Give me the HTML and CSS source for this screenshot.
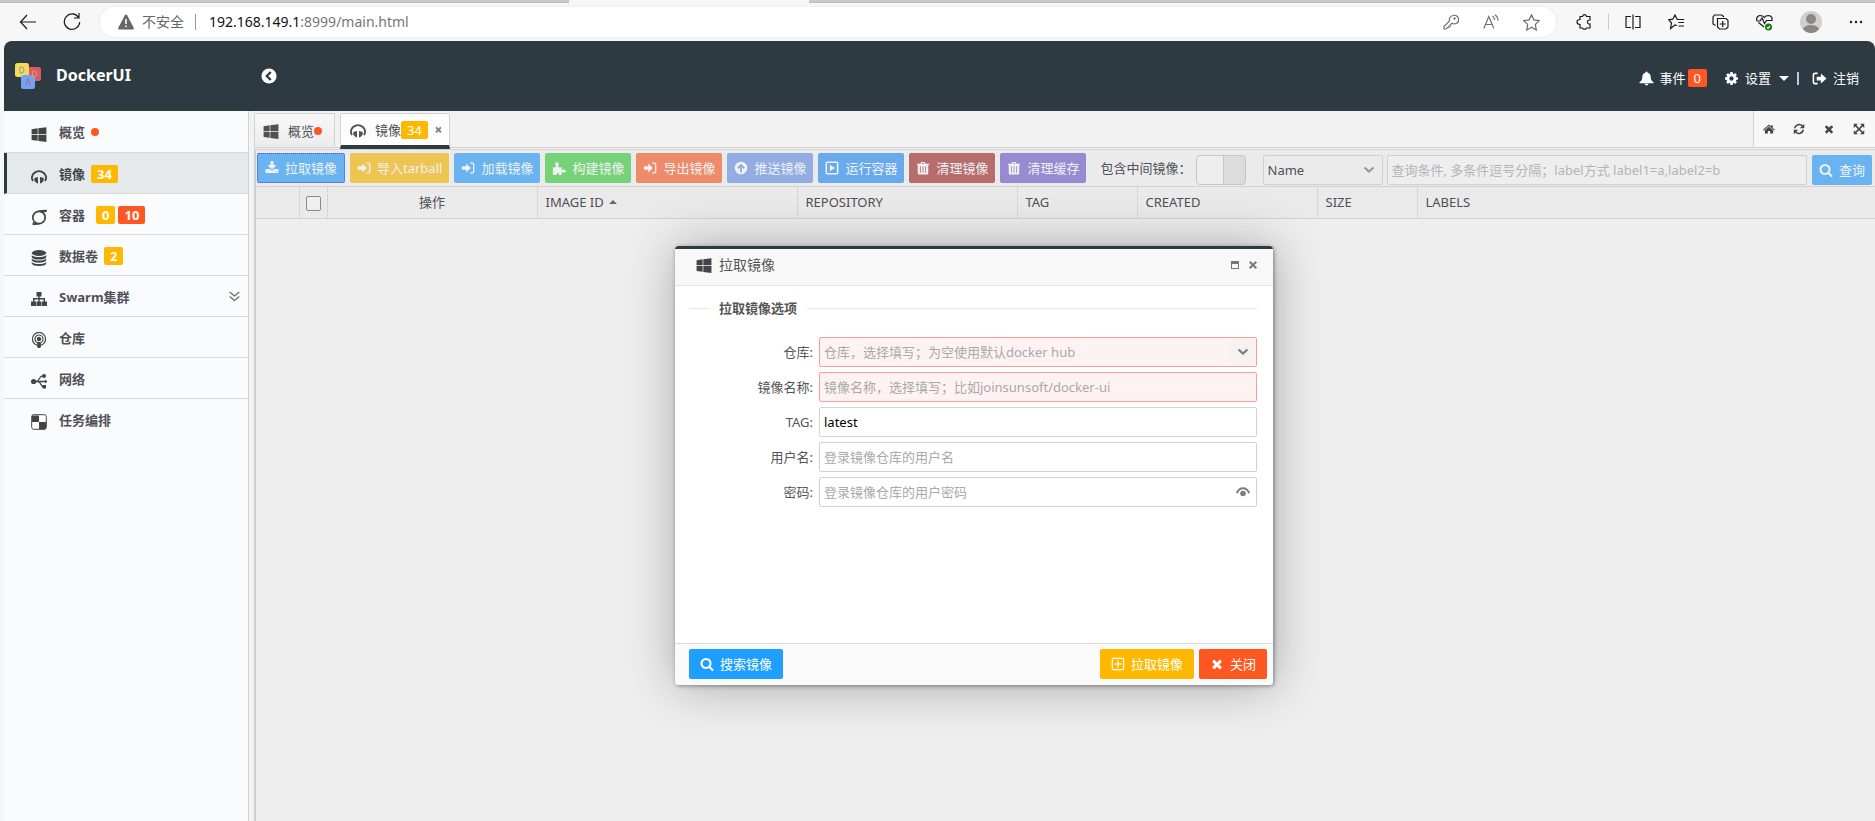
FILE: index.html
```html
<!DOCTYPE html>
<html lang="zh-CN">
<head>
<meta charset="utf-8">
<title>DockerUI</title>
<link rel="stylesheet" href="styles.css">
</head>
<body>
<svg class="sprite" aria-hidden="true">
  <symbol id="windows" viewBox="0 0 1792 1792"><path d="M746 1006v651l-682-94v-557h682zm0-743v659h-682v-565zm982 743v786l-907-125v-661h907zm0-878v794h-907v-669z"/></symbol>
  <symbol id="times" viewBox="0 0 1792 1792"><path d="M1490 1322q0 40-28 68l-136 136q-28 28-68 28t-68-28l-294-294-294 294q-28 28-68 28t-68-28l-136-136q-28-28-28-68t28-68l294-294-294-294q-28-28-28-68t28-68l136-136q28-28 68-28t68 28l294 294 294-294q28-28 68-28t68 28l136 136q28 28 28 68t-28 68l-294 294 294 294q28 28 28 68z"/></symbol>
  <symbol id="search" viewBox="0 0 1792 1792"><path d="M1216 832q0-185-131.500-316.500t-316.500-131.500-316.500 131.500-131.500 316.500 131.500 316.500 316.500 131.500 316.500-131.500 131.500-316.500zm512 832q0 52-38 90t-90 38q-54 0-90-38l-343-342q-179 124-399 124-143 0-273.500-55.500t-225-150-150-225-55.500-273.500 55.500-273.500 150-225 225-150 273.500-55.500 273.500 55.500 225 150 150 225 55.500 273.500q0 220-124 399l343 343q37 37 37 90z"/></symbol>
  <symbol id="download" viewBox="0 0 1792 1792"><path d="M1344 1344q0-26-19-45t-45-19-45 19-19 45 19 45 45 19 45-19 19-45zm256 0q0-26-19-45t-45-19-45 19-19 45 19 45 45 19 45-19 19-45zm128-224v320q0 40-28 68t-68 28h-1472q-40 0-68-28t-28-68v-320q0-40 28-68t68-28h465l135 136q58 56 136 56t136-56l136-136h464q40 0 68 28t28 68zm-325-569q17 41-14 70l-448 448q-18 19-45 19t-45-19l-448-448q-31-29-14-70 17-39 59-39h256v-448q0-26 19-45t45-19h256q26 0 45 19t19 45v448h256q42 0 59 39z"/></symbol>
  <symbol id="cog" viewBox="0 0 1792 1792"><path d="M1152 896q0-106-75-181t-181-75-181 75-75 181 75 181 181 75 181-75 75-181zm512-109v222q0 12-8 23t-20 13l-185 28q-19 54-39 91 35 50 107 138 10 12 10 25t-9 23q-27 37-99 108t-94 71q-12 0-26-9l-138-108q-44 23-91 38-16 136-29 186-7 28-36 28h-222q-14 0-24.500-8.500t-11.500-21.500l-28-184q-49-16-90-37l-141 107q-10 9-25 9-14 0-25-11-126-114-165-168-7-10-7-23 0-12 8-23 15-21 51-66.500t54-70.500q-27-50-41-99l-183-27q-13-2-21-12.500t-8-23.500v-222q0-12 8-23t19-13l186-28q14-46 39-92-40-57-107-138-10-12-10-24 0-10 9-23 26-36 98.500-107.500t94.500-71.500q13 0 26 10l138 107q44-23 91-38 16-136 29-186 7-28 36-28h222q14 0 24.500 8.500t11.500 21.500l28 184q49 16 90 37l142-107q9-9 24-9 13 0 25 10 129 119 165 170 7 8 7 22 0 12-8 23-15 21-51 66.500t-54 70.500q26 50 41 98l183 28q13 2 21 12.500t8 23.500z"/></symbol>
  <symbol id="mirror" viewBox="0 0 16 16"><path d="M2 13A7 6.500 0 1 1 14 13" fill="none" stroke="currentColor" stroke-width="2"/><path d="M3.200 10 7 9v6.500L5.500 15 3.500 13zM12.800 10 9 9v6.500l1.500-.5 2-2z"/></symbol>
  <symbol id="ring" viewBox="0 0 16 16"><circle cx="8" cy="8.500" r="6.200" fill="none" stroke="currentColor" stroke-width="1.700"/><path d="M7 1.600Q12 .6 16 .8L15.500 3 12 3.500zM1.800 13l2.700 1L9 15.400 4 16H1.500z"/></symbol>
  <symbol id="database" viewBox="0 0 16 16"><ellipse cx="8" cy="3" rx="7.300" ry="2.900"/><path d="M.7 5q2 2 7.300 2t7.300-2v2q-1 2.600-7.300 2.600T.7 7zM.7 8.600q2 2 7.300 2t7.300-2v1.500q-1 2.700-7.300 2.700T.7 10.100zM.7 12q2 2 7.300 2t7.300-2v1.500Q14.300 16 8 16T.7 13.500z"/></symbol>
  <symbol id="sitemap" viewBox="0 0 16 16"><path d="M5.500 1h5v4.500H8.700V7H14v3.500h2V15h-5v-4.500h1.500v-2H8.700v2h1.800V15h-5v-4.500h1.800v-2H3.500v2H5V15H0v-4.500h2V7h5.300V5.500H5.500z"/></symbol>
  <symbol id="podcast" viewBox="0 0 16 16"><circle cx="8" cy="7" r="6.600" fill="none" stroke="currentColor" stroke-width="1.200"/><circle cx="8" cy="7" r="4" fill="none" stroke="currentColor" stroke-width="1.200"/><circle cx="8" cy="7" r="2.200"/><rect x="6.200" y="10" width="3.600" height="6" rx="1.200"/></symbol>
  <symbol id="share" viewBox="0 0 16 16"><circle cx="2.600" cy="8.500" r="2.600"/><path d="M3 8.500h13M5 8.500q2-.2 3.500-3T12 3M7 8.500q2 .5 3 3t3 2.500" fill="none" stroke="currentColor" stroke-width="1.300"/><circle cx="13" cy="3" r="2"/><path d="M11.500 12H15v3.500h-3.500zM14 6.500l2 2-2 2z"/></symbol>
  <symbol id="check" viewBox="0 0 16 16"><rect x=".7" y=".7" width="14.600" height="14.600" rx="2" fill="#fff" stroke="currentColor" stroke-width="1"/><path d="M8 8h7v6.300l-1 1H8zM1 1.500h7V8H1z"/></symbol>
  <symbol id="signin" viewBox="0 0 16 16"><path d="M1 6h5V2.800L11.200 8 6 13.200V10H1z"/><path d="M10.500 2.500H13q1.500 0 1.500 1.500v8q0 1.500-1.500 1.500h-2.500" fill="none" stroke="currentColor" stroke-width="1.500"/></symbol>
  <symbol id="signout" viewBox="0 0 16 16"><path d="M5 6h4.500V2.700L15.500 8l-6 5.300V10H5z"/><path d="M6 2.500H3.200Q1.500 2.500 1.500 4v8q0 1.500 1.700 1.500H6" fill="none" stroke="currentColor" stroke-width="1.700"/></symbol>
  <symbol id="puzzle" viewBox="0 0 16 16"><path d="M1 7h3.500Q5 6.500 4 5 3 2 5.500 1.500 8.500 2 7.500 5 6.500 6.500 7.500 7H11v3q.5.800 2-.2Q16 9.500 16 11.500t-3 1.800Q11.500 12 11 13v3H8q0-1-.5-2t-1.500 0-.5 2H1z"/></symbol>
  <symbol id="up" viewBox="0 0 16 16"><path fill-rule="evenodd" d="M8 .8a7.200 7.200 0 1 1 0 14.400A7.200 7.200 0 0 1 8 .8zM8 3 3.500 7.500 5 9l1.900-1.800V13h2.200V7.200L11 9l1.500-1.500z"/></symbol>
  <symbol id="play" viewBox="0 0 16 16"><rect x="1.500" y="1.500" width="13" height="13" rx="1" fill="none" stroke="currentColor" stroke-width="1.800"/><path d="m5.500 4.300 6 3.700-6 3.700z"/></symbol>
  <symbol id="trash" viewBox="0 0 16 16"><path fill-rule="evenodd" d="M6 1h4l1 2h4v1.600h-1V14q0 1.500-1.500 1.500h-9Q2 15.500 2 14V4.600H1V3h4zm.7 1.200L6.300 3h3.400l-.4-.8zM4.500 6v7.500h1V6zm3 0v7.500h1V6zm3 0v7.500h1V6z"/></symbol>
  <symbol id="bell" viewBox="0 0 16 16"><path d="M8 .5q1 0 1 1 3.500 1 3.500 5 0 4 3 5.500V13H.5v-1q3-1.500 3-5.500 0-4 3.500-5 0-1 1-1zM6 13.600h4Q9.800 15.500 8 15.500T6 13.600z"/></symbol>
  <symbol id="home" viewBox="0 0 16 16"><path d="M8 2 11 4.700V3h2v3.500L16 9l-1 1-7-6-7 6-1-1zM2.500 9.700 8 5l5.500 4.700V14h-4v-3.500h-3V14h-4z"/></symbol>
  <symbol id="refresh" viewBox="0 0 16 16"><path d="M2.200 7A6 6 0 0 1 12.500 4M13.800 9A6 6 0 0 1 3.500 12" fill="none" stroke="currentColor" stroke-width="2"/><path d="M15 1v6H9zM1 15V9h6z"/></symbol>
  <symbol id="expand" viewBox="0 0 16 16"><path d="M1 1h5.500l-2 2L8 6.500 11.500 3l-2-2H15v5.500l-2-2L9.500 8l3.500 3.500 2-2V15H9.500l2-2L8 9.500 4.500 13l2 2H1V9.500l2 2L6.500 8 3 4.500l-2 2z"/></symbol>
  <symbol id="plusbox" viewBox="0 0 16 16"><path d="M2.500 1.500h11q1 0 1 1v11q0 1-1 1h-11q-1 0-1-1v-11q0-1 1-1zM8 4v8M4 8h8" fill="none" stroke="currentColor" stroke-width="1.300"/></symbol>
  <symbol id="chevron" viewBox="0 0 12 12"><path d="m1.500 3.500 4.500 4 4.500-4" fill="none" stroke="currentColor" stroke-width="2.200"/></symbol>
</svg>

<div class="browser">
  <div class="tabstrip"><span class="tab-active"></span></div>
  <div class="browser-bar">
    <button class="nav-btn" aria-label="后退"><svg width="18" height="18" viewBox="0 0 18 18" class="line"><path d="M17 9H1.500M8 2 1.500 9 8 16"/></svg></button>
    <button class="nav-btn" aria-label="刷新"><svg width="18" height="18" viewBox="0 0 18 18" class="line"><path d="M15.500 4.500A7.700 7.700 0 1 0 16.700 9M16 0v5h-5"/></svg></button>
    <div class="address">
      <svg width="16" height="16" viewBox="0 0 16 16" class="warn"><path d="M8 .5q.7 0 1.100.7l6.600 12.500q.6 1.600-1 1.800H1.300q-1.600-.2-1-1.800L6.900 1.200Q7.300.5 8 .5z"/><path d="M7.200 5h1.600v5H7.200zM7.200 11.500h1.600V13H7.200z" fill="#fff"/></svg>
      <span class="insecure">不安全</span>
      <span class="address-sep"></span>
      <span class="url"><b>192.168.149.1</b>:8999/main.html</span>
      <span class="address-icons">
        <svg width="16" height="16" viewBox="0 0 16 16" class="line"><path d="M10 1.500a4.300 4.300 0 1 1-1 7.700L7.500 10.500V12H6v1.500H4.500L3 15H1v-2.500l5.500-5.700A4.300 4.300 0 0 1 10 1.500z"/><circle cx="11.500" cy="4.500" r=".6"/></svg>
        <svg width="16" height="16" viewBox="0 0 16 16" class="line"><path d="m.8 14.500 5-12 5 12M2.500 10.500h6.700M9.500 2q2 1.500 2 4M12 .8q3 2.200 3 5.700"/></svg>
        <svg width="17" height="17" viewBox="0 0 16 16" class="line"><path d="m8 .8 2.200 4.700 5.100.7-3.700 3.600.9 5.200L8 12.500 3.500 15l.9-5.200L.7 6.200l5.100-.7z"/></svg>
      </span>
    </div>
    <div class="browser-tools">
      <svg width="16" height="16" viewBox="0 0 16 16" class="line"><path d="M4 2.500h2.500Q7 .7 8.500.7t2 1.800H14V6q-2.500-.2-2.500 2t2.500 2v4h-3.500q-.5 1.300-2 1.300T6.500 14H4v-3.500Q1 10.300 1 8t3-2.500z"/></svg>
      <span class="tool-sep"></span>
      <svg width="16" height="16" viewBox="0 0 16 16" class="line"><path d="M6 2.500H1v11h5M10 2.500h5v11h-5M8 .5v15"/></svg>
      <svg width="17" height="16" viewBox="0 0 17 16" class="line"><path d="M9 11.500 7 11l-4.500 3.500 1-5.500L.8 5.800l4-.6L7 1l2.200 4.500h7M10.500 8.500H16M10.500 12H16"/></svg>
      <svg width="17" height="16" viewBox="0 0 17 16" class="line"><path d="M3.500 11.500 1 10V3l1.500-2h7.500l2 2M5.500 4.500H14l2 2V13l-2 2H7.500l-2-2zM10.700 7v6M7.700 10h6"/></svg>
      <svg width="17" height="17" viewBox="0 0 17 17" class="line"><path d="M8 13 2.500 8.500M.8 7Q0 2 4 1.500q3 0 4.300 2Q9.500 1.500 12.500 1.500 17 2 15.800 7M.8 7H4l2-3 2.500 5.500 2-3H16"/><circle cx="12.500" cy="13" r="3.500" fill="#107c10" stroke="none"/><path d="m11 13.300 1 1 2-2.300" stroke="#fff"/></svg>
      <svg width="22" height="22" viewBox="0 0 22 22"><circle cx="11" cy="11" r="11" fill="#d2d0ce"/><circle cx="11" cy="8" r="5" fill="#8a8886"/><path d="M3 18q2-4 8-4t8 4q-3 4-8 4t-8-4z" fill="#8a8886"/></svg>
      <svg width="14" height="4" viewBox="0 0 14 4"><circle cx="2" cy="2" r="1.200"/><circle cx="7" cy="2" r="1.200"/><circle cx="12" cy="2" r="1.200"/></svg>
    </div>
  </div>
</div>

<div class="app">
  <header class="header">
    <div class="brand">
      <svg width="26" height="26" viewBox="0 0 26 26"><rect x="12" y="4" width="14" height="14" rx="2.500" fill="#d95b6b"/><rect width="14" height="14" rx="2.500" fill="#f3d95c"/><rect x="6" y="12" width="14" height="14" rx="2.500" fill="#6ea6f7"/><path d="M5 4v6h1.500Q9 10 9 7T6.500 4z" fill="none" stroke="#8ba38b"/><path d="M17.500 8v6H19q2.500 0 2.500-3T19 8z" fill="none" stroke="#f0995a"/><path d="m10.500 22.500 2.500-7 2.500 7m-4.200-2.500h3.400" fill="none" stroke="#b06aa0"/></svg>
      <h1 class="brand-name">DockerUI</h1>
    </div>
    <button class="collapse" aria-label="收起菜单"><svg width="16" height="16" viewBox="0 0 16 16"><circle cx="8" cy="8" r="7.600" fill="#fff"/><path d="M9.800 4 5.800 8l4 4" fill="none" stroke="#2d3a42" stroke-width="2.300"/></svg></button>
    <nav class="header-links">
      <a href="#" class="events"><svg class="ico"><use href="#bell"/></svg><span>事件</span><span class="badge red">0</span></a>
      <a href="#" class="settings"><svg class="ico"><use href="#cog"/></svg><span>设置</span><span class="caret"></span></a>
      <span class="header-sep"></span>
      <a href="#" class="logout"><svg class="ico"><use href="#signout"/></svg><span>注销</span></a>
    </nav>
  </header>

  <div class="body">
    <nav class="sidebar">
      <a href="#" class="item"><svg class="ico"><use href="#windows"/></svg><span>概览</span><span class="dot"></span></a>
      <a href="#" class="item current"><svg class="ico"><use href="#mirror"/></svg><span>镜像</span><span class="badge">34</span></a>
      <a href="#" class="item"><svg class="ico"><use href="#ring"/></svg><span>容器</span><span class="badges"><span class="badge">0</span><span class="badge red">10</span></span></a>
      <a href="#" class="item"><svg class="ico"><use href="#database"/></svg><span>数据卷</span><span class="badge">2</span></a>
      <a href="#" class="item"><svg class="ico"><use href="#sitemap"/></svg><span>Swarm集群</span><svg class="more" width="11" height="11" viewBox="0 0 11 11"><path d="m.7 1 4.800 4L10.300 1M.7 5.500l4.800 4 4.800-4" fill="none" stroke="currentColor" stroke-width="1.100"/></svg></a>
      <a href="#" class="item"><svg class="ico"><use href="#podcast"/></svg><span>仓库</span></a>
      <a href="#" class="item"><svg class="ico"><use href="#share"/></svg><span>网络</span></a>
      <a href="#" class="item"><svg class="ico"><use href="#check"/></svg><span>任务编排</span></a>
    </nav>

    <main class="main">
      <div class="tabs">
        <button class="tab"><svg class="ico"><use href="#windows"/></svg><span>概览</span><span class="dot"></span></button>
        <div class="tab active"><svg class="ico"><use href="#mirror"/></svg><span>镜像</span><span class="badge">34</span><button class="tab-close" aria-label="关闭标签"><svg><use href="#times"/></svg></button></div>
        <div class="tab-tools">
          <button aria-label="主页"><svg><use href="#home"/></svg></button>
          <button aria-label="刷新页面"><svg><use href="#refresh"/></svg></button>
          <button aria-label="关闭"><svg><use href="#times"/></svg></button>
          <button aria-label="全屏"><svg><use href="#expand"/></svg></button>
        </div>
      </div>

      <section class="content">
        <div class="toolbar">
          <div class="actions">
            <button class="btn sky focused"><svg><use href="#download"/></svg>拉取镜像</button>
            <button class="btn gold"><svg><use href="#signin"/></svg>导入tarball</button>
            <button class="btn sky"><svg><use href="#signin"/></svg>加载镜像</button>
            <button class="btn green"><svg><use href="#puzzle"/></svg>构建镜像</button>
            <button class="btn coral"><svg><use href="#signin"/></svg>导出镜像</button>
            <button class="btn peri"><svg><use href="#up"/></svg>推送镜像</button>
            <button class="btn azure"><svg><use href="#play"/></svg>运行容器</button>
            <button class="btn brick"><svg><use href="#trash"/></svg>清理镜像</button>
            <button class="btn violet"><svg><use href="#trash"/></svg>清理缓存</button>
          </div>
          <label class="switch-label" for="middle">包含中间镜像：</label>
          <input class="switch" type="checkbox" id="middle">
          <div class="select-box">
            <select class="select" aria-label="查询字段"><option>Name</option></select>
            <svg class="select-arrow"><use href="#chevron"/></svg>
          </div>
          <input class="query" type="text" aria-label="查询条件" placeholder="查询条件, 多条件逗号分隔；label方式 label1=a,label2=b">
          <button class="btn sky query-btn"><svg><use href="#search"/></svg>查询</button>
        </div>
        <table class="grid">
          <colgroup><col class="c-num"><col class="c-check"><col class="c-op"><col class="c-id"><col class="c-repo"><col class="c-tag"><col class="c-created"><col class="c-size"><col></colgroup>
          <thead><tr>
            <th></th><th class="center"><input class="check-all" type="checkbox" aria-label="全选"></th><th class="center">操作</th><th>IMAGE ID<span class="sort"></span></th><th>REPOSITORY</th><th>TAG</th><th>CREATED</th><th>SIZE</th><th>LABELS</th>
          </tr></thead>
        </table>
      </section>
    </main>
  </div>
</div>

<div class="dialog" role="dialog" aria-labelledby="dlg-title">
  <div class="dialog-head">
    <svg class="ico"><use href="#windows"/></svg>
    <h2 class="dialog-title" id="dlg-title">拉取镜像</h2>
    <button class="win-btn" aria-label="最大化"><svg width="8" height="8" viewBox="0 0 8 8"><path fill-rule="evenodd" d="M0 0h8v8H0zM1 3v4h6V3z"/></svg></button>
    <button class="win-btn" aria-label="关闭窗口"><svg width="8" height="8" viewBox="0 0 8 8"><path d="m.7.700 6.600 6.600M7.300.7.700 7.300" stroke="currentColor" stroke-width="2"/></svg></button>
  </div>
  <form class="dialog-body">
    <div class="legend">拉取镜像选项</div>
    <div class="row"><label for="repo">仓库:</label><div class="field invalid"><input id="repo" type="text" placeholder="仓库，选择填写；为空使用默认docker hub"><button type="button" class="drop" aria-label="选择仓库"><svg><use href="#chevron"/></svg></button></div></div>
    <div class="row"><label for="image">镜像名称:</label><div class="field invalid"><input id="image" type="text" placeholder="镜像名称，选择填写；比如joinsunsoft/docker-ui"></div></div>
    <div class="row"><label for="tag">TAG:</label><div class="field"><input id="tag" type="text" value="latest"></div></div>
    <div class="row"><label for="user">用户名:</label><div class="field"><input id="user" type="text" placeholder="登录镜像仓库的用户名"></div></div>
    <div class="row"><label for="pass">密码:</label><div class="field"><input id="pass" type="password" placeholder="登录镜像仓库的用户密码"><button type="button" class="eye" aria-label="显示密码"><svg width="14" height="10" viewBox="0 0 14 10"><path d="M.8 6Q3 1.200 7 1.200T13.200 6" fill="none" stroke="currentColor" stroke-width="2"/><circle cx="7" cy="6.500" r="2.800"/></svg></button></div></div>
  </form>
  <div class="dialog-foot">
    <button class="btn blue solid"><svg><use href="#search"/></svg>搜索镜像</button>
    <span class="foot-right">
      <button class="btn amber solid"><svg><use href="#plusbox"/></svg>拉取镜像</button>
      <button class="btn orange solid"><svg><use href="#times"/></svg>关闭</button>
    </span>
  </div>
</div>
</body>
</html>
```
FILE: styles.css
```css
* { box-sizing: border-box; }

body {
  margin: 0;
  height: 100vh;
  display: flex;
  flex-direction: column;
  overflow: hidden;
  background: #f6f7f7;
  color: #505058;
  font: 13px/18px "Noto Sans", "Noto Sans CJK SC", sans-serif;
}

button, input, select { font: inherit; color: inherit; margin: 0; }
button { border: 0; padding: 0; background: none; display: inline-flex; align-items: center; justify-content: center; }
a { color: inherit; text-decoration: none; }
svg { fill: currentColor; flex: none; display: block; }
.sprite { position: absolute; width: 0; height: 0; }
.ico { width: 16px; height: 16px; }
.line { fill: none; stroke: currentColor; stroke-width: 1.2; }

/* Browser frame */
.browser { color: #1b1b1b; }
.tabstrip { height: 3px; background: #c9c9c9; border-bottom: 1px solid #bcbcbc; padding-left: 569px; }
.tab-active { display: block; width: 240px; height: 3px; background: #f7f7f7; }
.browser-bar { display: flex; align-items: center; height: 38px; padding: 0 12px 0 19px; background: #f7f7f7; }
.nav-btn { width: 18px; margin-right: 26px; }
.address { flex: 1; display: flex; align-items: center; height: 30px; margin-left: -7px; padding: 0 16px 0 18px; border-radius: 15px; background: #fff; box-shadow: 0 0 3px #e4e4e4; font-size: 14px; }
.warn { color: #666; }
.insecure { margin-left: 8px; color: #666; }
.address-sep { width: 1px; height: 16px; margin: 0 13px 0 11px; background: #999; }
.url { color: #767676; }
.url b { font-weight: 400; color: #111; }
.address-icons { margin-left: auto; display: flex; align-items: center; gap: 24px; color: #707070; }
.browser-tools { display: flex; align-items: center; gap: 27px; margin-left: 20px; }
.tool-sep { width: 1px; height: 16px; margin: 0 -11px; background: #ccc; }

/* App shell */
.app { flex: 1; display: flex; flex-direction: column; min-height: 0; margin-left: 4px; }
.header { display: flex; align-items: center; height: 70px; padding: 0 16px 0 11px; border-radius: 8px 8px 0 0; background: #2d3a42; color: #fff; }
.brand { display: flex; align-items: center; gap: 15px; width: 246px; }
.brand-name { margin: 0; padding-bottom: 2px; font-size: 16px; line-height: 20px; font-weight: 700; }
.header-links { margin-left: auto; display: flex; align-items: center; padding-top: 4px; }
.header-links a { display: flex; align-items: center; }
.header-links .ico { width: 15px; height: 15px; margin-right: 6px; }
.events { margin-right: 17px; }
.events .badge { margin-left: 2px; }
.caret { margin-left: 8px; border: 5px solid transparent; border-top-color: #fff; border-bottom: 0; }
.header-sep { width: 2px; height: 13px; margin: 0 13px 0 8px; background: #a9d0ea; }

.badge { display: inline-block; height: 18px; padding: 0 6px; border-radius: 2px; background: #ffb800; color: #fff; }
.red { background: #ff5722; }
.dot { width: 8px; height: 8px; border-radius: 50%; background: #ff5722; }

.body { flex: 1; display: flex; min-height: 0; }
.sidebar { width: 245px; background: #fafbfc; border-right: 1px solid #d2d2d2; font-weight: 700; }
.item { display: flex; align-items: center; height: 41px; padding: 1px 8px 0 27px; border-bottom: 1px solid #d9dadc; }
.item:first-child { height: 42px; }
.item:last-child { border-bottom: 0; }
.item .ico { margin: 4px 12px 0 0; color: #444; }
.item .dot, .item .badge { margin-left: 6px; }
.current { padding-left: 24px; border-left: 3px solid #2d3a42; background: #e6e9ec; color: #444; }
.badges { display: flex; gap: 3px; margin-left: 5px; }
.item .badges .badge + .badge { margin-left: 0; }
.more { margin-left: auto; color: #666; }

.main { flex: 1; min-width: 0; display: flex; flex-direction: column; padding-left: 5px; background: #f2f2f2; }
.tabs { display: flex; align-items: flex-start; gap: 5px; height: 37px; padding-top: 2px; border-bottom: 1px solid #d2d2d2; }
.tab { display: flex; align-items: center; height: 34px; padding: 0 12px 0 8px; border: 1px solid #d2d2d2; border-bottom: 0; border-radius: 2px 2px 0 0; background: linear-gradient(#f8f8f8, #ececec); }
.tab .ico { margin-right: 9px; }
.active { height: 36px; padding: 0 6px 0 9px; border-bottom: 4px solid #2d3a42; background: #fdfdfd; }
.tab-close { margin-left: 6px; color: #80838f; }
.tab-close svg { width: 9px; height: 9px; }
.tab-tools { align-self: stretch; display: flex; align-items: center; margin: -2px 0 0 auto; padding: 0 1px 0 0; border-left: 1px solid #d2d2d2; background: #f7f7f7; color: #444; }
.tab-tools button { width: 30px; height: 36px; }
.tab-tools svg { width: 12px; height: 12px; }

.content { flex: 1; margin-top: 1px; border-top: 1px solid #d2d2d2; border-left: 2px solid #cfcfcf; background: #eee; }
.toolbar { display: flex; align-items: center; height: 37px; padding: 0 3px 0 1px; border-bottom: 1px solid #d2d2d2; background: #ebebeb; }
.actions { display: flex; gap: 5px; }
.btn { height: 30px; padding: 0 7px; border-radius: 2px; color: #eef2f5; white-space: nowrap; }
.btn svg { width: 14px; height: 14px; margin-right: 6px; }
.sky { background: #69b4f0; }
.gold { background: #eec453; }
.green { background: #76d276; }
.coral { background: #f08b6a; }
.peri { background: #93ade2; }
.azure { background: #69aaef; }
.brick { background: #b86d6d; }
.violet { background: #978ad0; }
.focused { padding: 0 8px; outline: 1px dotted #4b4be0; outline-offset: -1px; }
.solid { color: #fff; padding: 0 11px; }
.blue { background: #1e9fff; }
.amber { background: #ffb800; }
.orange { background: #ff5722; }

.switch-label { margin-left: 14px; white-space: nowrap; }
.switch { appearance: none; width: 50px; height: 30px; margin: 3px 0 0 4px; border: 1px solid #c6c6c6; border-radius: 4px; background: linear-gradient(90deg, #eee 26px, #c6c6c6 26px, #c6c6c6 27px, #dcdcdc 27px); }
.select-box { display: flex; align-items: center; width: 120px; height: 30px; margin: 3px 4px 0 17px; border: 1px solid #d0d0d0; border-radius: 2px; }
.select { appearance: none; flex: 1; min-width: 0; height: 28px; border: 0; padding: 0 4px; background: none; }
.select-arrow { width: 12px; height: 12px; margin-right: 7px; color: #999; }
.query { flex: 1; min-width: 0; height: 30px; margin: 3px 5px 0 0; padding: 0 4px; border: 1px solid #d0d0d0; border-radius: 2px; background: #eee; }
.query::placeholder { color: #b4b4b4; }
.query-btn { margin-top: 3px; }

.grid { width: 100%; table-layout: fixed; border-collapse: collapse; background: #eaeaea; }
.grid th { height: 31px; padding: 0 8px; border-right: 1px dotted #c4c4c4; border-bottom: 1px solid #d2d2d2; font-weight: 400; text-align: left; }
.grid th:last-child { border-right: 0; }
.grid .center { padding: 0; text-align: center; }
.c-num { width: 43px; }
.c-check { width: 28px; }
.c-op { width: 210px; }
.c-id { width: 260px; }
.c-repo { width: 220px; }
.c-tag { width: 120px; }
.c-created { width: 180px; }
.c-size { width: 100px; }
.check-all { appearance: none; width: 15px; height: 15px; border: 1px solid #8a8a8a; border-radius: 2px; background: #efefef; vertical-align: middle; }
.sort { display: inline-block; margin: 0 0 3px 5px; border: 4px solid transparent; border-bottom-color: #666; border-top: 0; }

/* Floating window */
.dialog { position: absolute; left: 36%; top: 30%; width: 598px; display: flex; flex-direction: column; border-top: 3px solid #2d3a42; border-radius: 4px; background: #fff; box-shadow: 1px 1px 4px rgba(0, 0, 0, .4), 1px 1px 50px rgba(0, 0, 0, .3); color: #555; }
.dialog-head { display: flex; align-items: center; height: 37px; padding: 0 11px 4px 21px; border-bottom: 1px solid #e6e6e6; background: #f8f8f8; }
.dialog-head .ico { color: #444; margin-right: 7px; }
.dialog-title { flex: 1; margin: 0; font-size: 14px; line-height: 20px; font-weight: 400; }
.win-btn { width: 18px; height: 18px; color: #777; }
.dialog-body { display: flex; flex-direction: column; gap: 5px; min-height: 357px; padding: 13px 16px 0 14px; }
.legend { display: flex; align-items: center; gap: 10px; margin-bottom: 15px; font-weight: 700; }
.legend::before, .legend::after { content: ""; height: 1px; background: #e6e6e6; }
.legend::before { width: 20px; }
.legend::after { flex: 1; }
.row { display: flex; align-items: center; }
.row label { width: 130px; padding-right: 6px; text-align: right; }
.field { flex: 1; display: flex; height: 30px; border: 1px solid #d2d2d2; border-radius: 2px; }
.field input { flex: 1; min-width: 0; padding: 0 4px; border: 0; background: none; color: #000; }
.field input::placeholder { color: #a9a9a9; }
.invalid { border-color: #ff9c9c; background: #fff2f2; }
.drop, .eye { width: 26px; color: #7d7d7d; }
.drop { background: #f6f2f2; }
.drop svg { width: 12px; height: 12px; }
.dialog-foot { display: flex; align-items: center; justify-content: space-between; height: 42px; padding: 0 6px 2px 14px; border-top: 1px solid #dcdcdc; border-radius: 0 0 4px 4px; background: #fafafa; }
.foot-right { display: flex; gap: 5px; }
```
